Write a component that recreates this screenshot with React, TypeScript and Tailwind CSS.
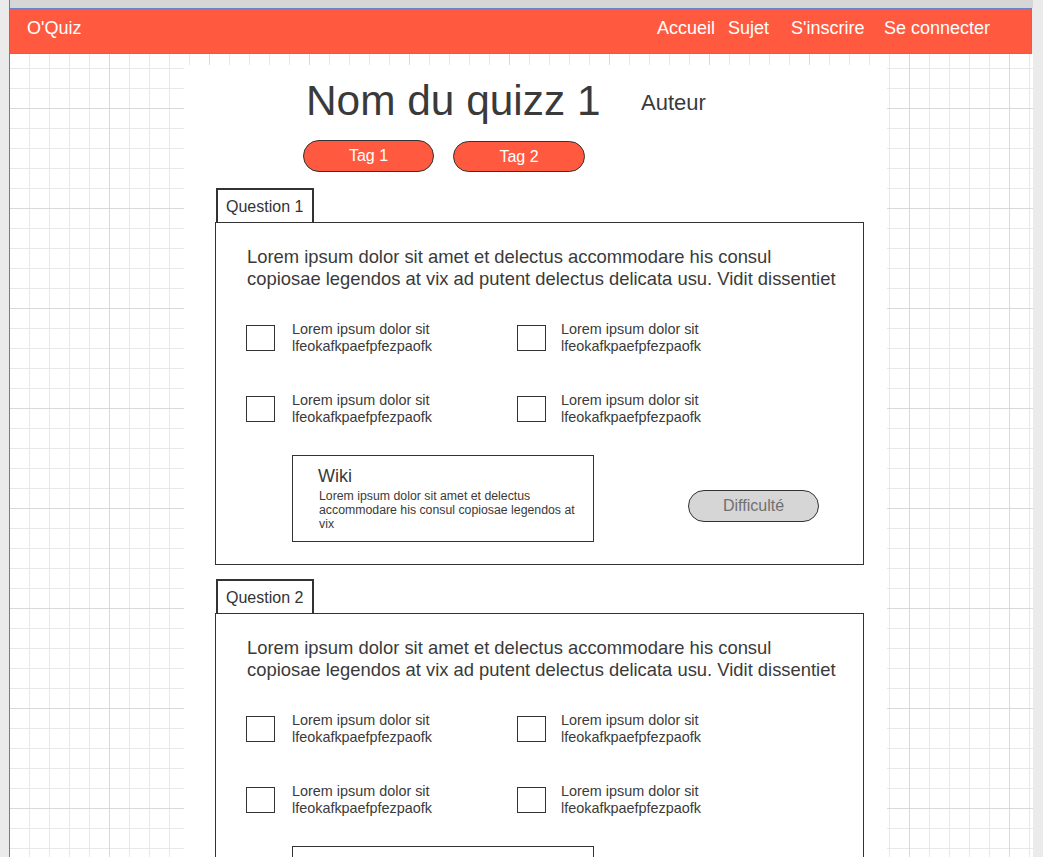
import React from 'react';

// answers shown in every question card
const answers = [
  { line1: 'Lorem ipsum dolor sit', line2: 'lfeokafkpaefpfezpaofk' },
  { line1: 'Lorem ipsum dolor sit', line2: 'lfeokafkpaefpfezpaofk' },
  { line1: 'Lorem ipsum dolor sit', line2: 'lfeokafkpaefpfezpaofk' },
  { line1: 'Lorem ipsum dolor sit', line2: 'lfeokafkpaefpfezpaofk' },
];

const Answer = ({ line1, line2, right }: { line1: string; line2: string; right?: boolean }) => (
  <div className="flex items-center">
    <div className="h-[26px] w-[29px] shrink-0 border border-[#333]" />
    <div
      className={
        (right ? 'ml-[15px] ' : 'ml-[17px] ') +
        'whitespace-nowrap text-[14.4px] leading-[17px] text-[#3a3a3a]'
      }
    >
      {line1}
      <br />
      {line2}
    </div>
  </div>
);

const Question = ({ n }: { n: number }) => (
  <div className="ml-[31px] flex flex-col">
    <div className="ml-[1px] flex h-[34px] w-[98px] items-center border-x-2 border-t-2 border-[#333] pl-[8px] pt-[1px] text-[16px] leading-none text-[#333]">
      Question {n}
    </div>
    <div className="flex w-[649px] flex-col border border-[#333] pb-[22px] pl-[30px] pt-[22px]">
      <p className="ml-[1px] mt-[1px] whitespace-nowrap text-[18.4px] leading-[22px] text-[#3a3a3a]">
        Lorem ipsum dolor sit amet et delectus accommodare his consul
        <br />
        copiosae legendos at vix ad putent delectus delicata usu. Vidit dissentiet
      </p>
      <div className="mt-[31px] grid grid-cols-[271px_271px] gap-y-[37px]">
        {answers.map((a, i) => (
          <Answer key={i} line1={a.line1} line2={a.line2} right={i % 2 === 1} />
        ))}
      </div>
      <div className="ml-[46px] mt-[29px] flex items-start">
        <div className="h-[87px] w-[302px] border border-[#333] pl-[25px] pt-[10px]">
          <div className="text-[18px] leading-[20px] text-[#3a3a3a]">Wiki</div>
          <p className="ml-[1px] mt-[3px] whitespace-nowrap text-[12.3px] leading-[14px] text-[#3a3a3a]">
            Lorem ipsum dolor sit amet et delectus
            <br />
            accommodare his consul copiosae legendos at
            <br />
            vix
          </p>
        </div>
        <div className="ml-[94px] mt-[35px] flex h-[32px] w-[131px] items-center justify-center rounded-full border border-[#333] bg-[#d6d6d6] text-[16px] text-[#707070]">
          Difficulté
        </div>
      </div>
    </div>
  </div>
);

const App = () => {
  return (
    <div className="flex h-[857px] w-[1043px] overflow-hidden bg-[#ebebeb] font-['Liberation_Sans',Arial,sans-serif]">
      <div className="w-[9px] shrink-0" />
      <div className="flex w-[1024px] shrink-0 flex-col border-l border-[#4f7fd6]">
        <div className="h-[8px] shrink-0 bg-[#d6d6d6]" />
        <header className="flex h-[46px] w-[1022px] shrink-0 items-start border-y border-r border-[#6d80cc] bg-[#ff5a40] pt-[10px] text-[18px] leading-none text-white">
          <div className="w-[647px] pl-[17px]">O'Quiz</div>
          <nav className="flex">
            <a className="w-[71px]">Accueil</a>
            <a className="w-[63px]">Sujet</a>
            <a className="w-[93px]">S'inscrire</a>
            <a>Se connecter</a>
          </nav>
        </header>
        <div className="flex flex-1 flex-col bg-white bg-[linear-gradient(to_right,#d9d9d9_1px,transparent_1px),linear-gradient(to_bottom,#d9d9d9_1px,transparent_1px),linear-gradient(to_right,#e8e8e8_1px,transparent_1px),linear-gradient(to_bottom,#e8e8e8_1px,transparent_1px)] bg-[size:100px_100px,100px_100px,20px_20px,20px_20px] bg-[position:-1px_-46px] pt-[11px]">
          <main className="ml-[174px] flex w-[703px] flex-1 flex-col bg-white pt-[15px]">
            <div className="flex items-start">
              <h1 className="ml-[122px] w-[335px] whitespace-nowrap text-[42.4px] leading-[42px] text-[#3a3a3a]">
                Nom du quizz 1
              </h1>
              <div className="mt-[12px] text-[22px] leading-none text-[#3a3a3a]">Auteur</div>
            </div>
            <div className="ml-[119px] mt-[18px] flex items-start">
              <span className="flex h-[32px] w-[131px] items-center justify-center rounded-full border border-[#333] bg-[#ff5a40] text-[16px] text-white">
                Tag 1
              </span>
              <span className="ml-[19px] mt-[1px] flex h-[31px] w-[132px] items-center justify-center rounded-full border border-[#333] bg-[#ff5a40] text-[16px] text-white">
                Tag 2
              </span>
            </div>
            <div className="mt-[16px] flex flex-col gap-[14px]">
              <Question n={1} />
              <Question n={2} />
            </div>
          </main>
        </div>
      </div>
      <div className="flex-1" />
    </div>
  );
};

export default App;
